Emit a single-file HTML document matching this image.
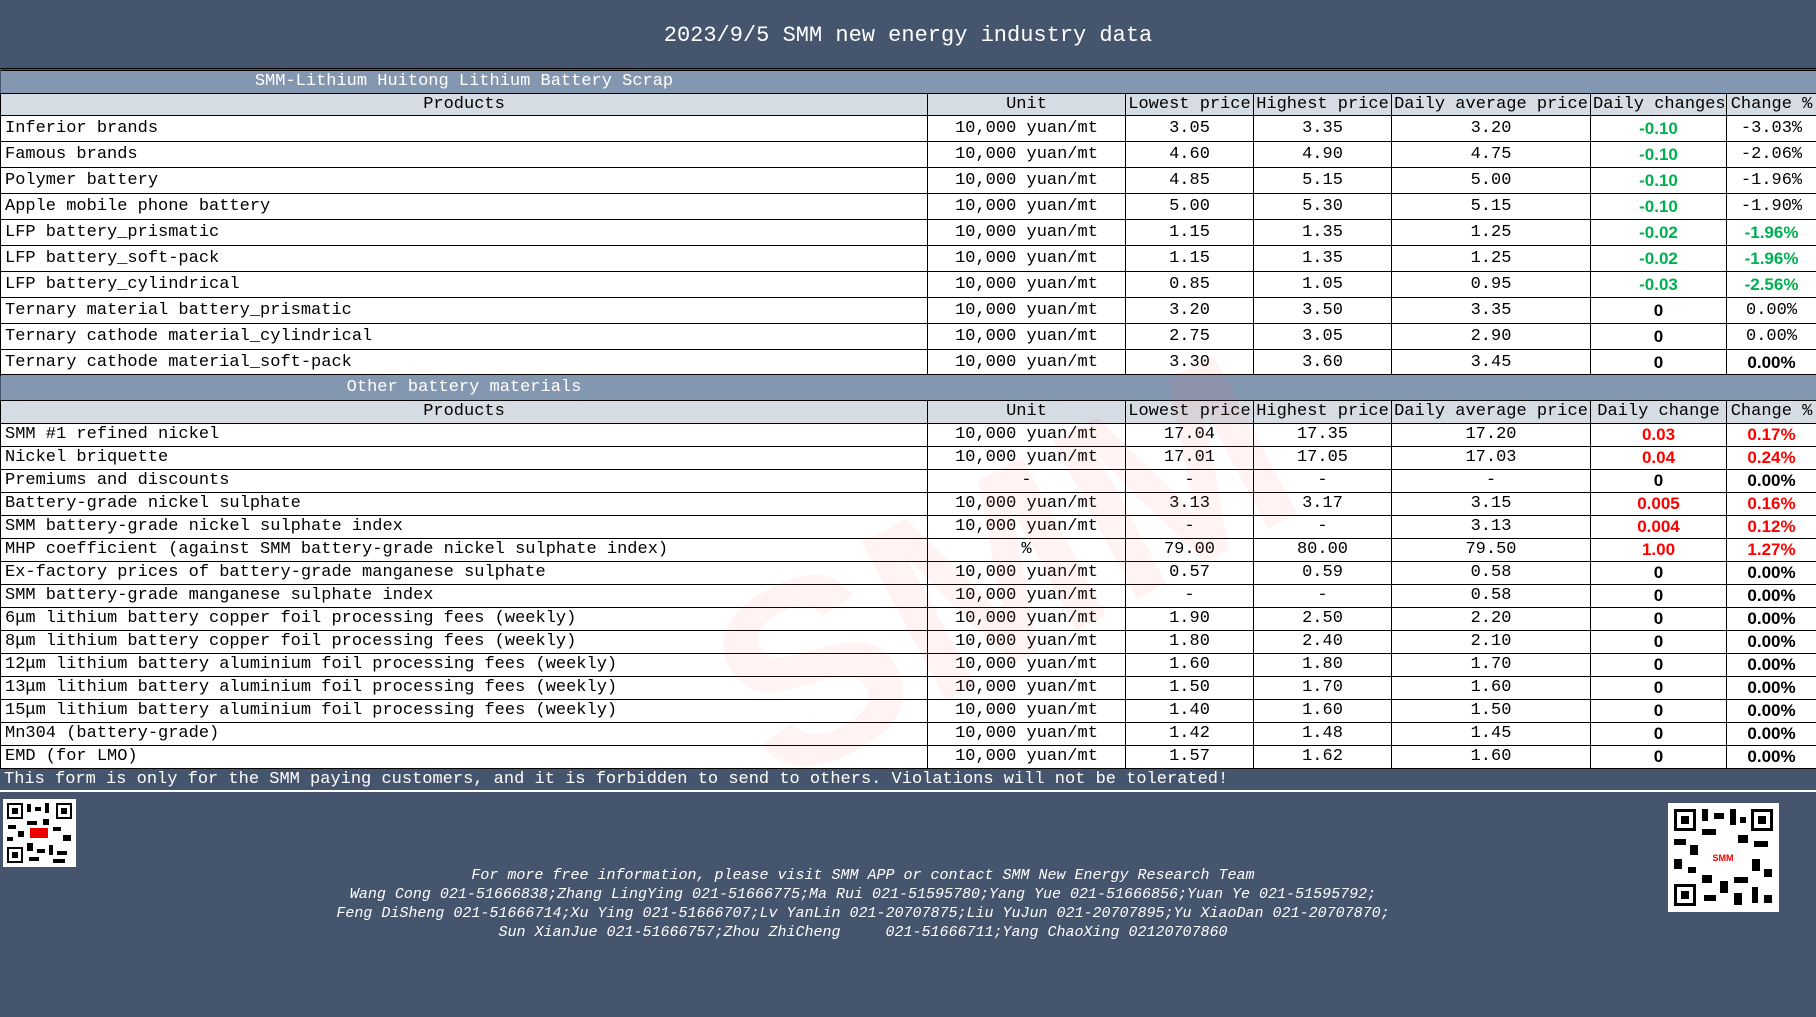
<!DOCTYPE html>
<html><head><meta charset="utf-8"><style>
*{margin:0;padding:0;box-sizing:border-box}
body{width:1816px;height:1017px;background:#46556e;position:relative;overflow:hidden;font-family:"Liberation Mono","Noto Sans CJK SC",monospace;font-size:17px;color:#000}
#title{position:absolute;left:0;top:0;width:1816px;height:69px;line-height:72px;text-align:center;color:#fff;font-size:22px;border-bottom:1px solid #000}
table{position:absolute;left:0;width:1816px;border-collapse:collapse;table-layout:fixed}
td{border:1px solid #000;white-space:nowrap;overflow:hidden;text-align:center;padding:0 2px;line-height:18px;vertical-align:middle}
td.l{text-align:left;padding-left:4px}
tr.sec td{background:#8497b0;color:#fff;border-left:none;border-right:none}
tr.hd td{background:#d6dce4}
tr.d td{background:#fff}
.g{color:#00b050;font-family:"Liberation Sans",sans-serif;font-weight:bold}
.r{color:#ff0000;font-family:"Liberation Sans",sans-serif;font-weight:bold}
.s{font-family:"Liberation Sans",sans-serif;font-weight:bold}
.t1 tr.d td{height:26px}
.t2 tr.d td{height:23px}
#disc{position:absolute;left:0;top:768px;width:1816px;height:24px;line-height:24px;color:#fff;padding-left:4px;border-bottom:2px solid #fff}
#foot{position:absolute;left:0;top:866px;width:1726px;text-align:center;color:#fff;font-style:italic;font-size:15px;line-height:19px}
#wm{position:absolute;left:700px;top:420px;font-family:"Liberation Sans",sans-serif;font-weight:bold;font-size:260px;color:rgba(255,80,80,0.07);transform:rotate(-28deg);pointer-events:none}
</style></head><body>
<div id="title">2023/9/5 SMM new energy industry data</div>
<table class="t1" style="top:70px">
<colgroup><col style="width:927px"><col style="width:198px"><col style="width:128px"><col style="width:138px"><col style="width:199px"><col style="width:136px"><col style="width:90px"></colgroup>
<tr class="sec"><td style="height:23px">SMM-Lithium Huitong Lithium Battery Scrap</td><td colspan="6"></td></tr>
<tr class="hd"><td style="height:22px">Products</td><td>Unit</td><td>Lowest price</td><td>Highest price</td><td>Daily average price</td><td>Daily changes</td><td>Change %</td></tr>
<tr class="d"><td class="l">Inferior brands</td><td>10,000 yuan/mt</td><td>3.05</td><td>3.35</td><td>3.20</td><td class="g">-0.10</td><td>-3.03%</td></tr>
<tr class="d"><td class="l">Famous brands</td><td>10,000 yuan/mt</td><td>4.60</td><td>4.90</td><td>4.75</td><td class="g">-0.10</td><td>-2.06%</td></tr>
<tr class="d"><td class="l">Polymer battery</td><td>10,000 yuan/mt</td><td>4.85</td><td>5.15</td><td>5.00</td><td class="g">-0.10</td><td>-1.96%</td></tr>
<tr class="d"><td class="l">Apple mobile phone battery</td><td>10,000 yuan/mt</td><td>5.00</td><td>5.30</td><td>5.15</td><td class="g">-0.10</td><td>-1.90%</td></tr>
<tr class="d"><td class="l">LFP battery_prismatic</td><td>10,000 yuan/mt</td><td>1.15</td><td>1.35</td><td>1.25</td><td class="g">-0.02</td><td class="g">-1.96%</td></tr>
<tr class="d"><td class="l">LFP battery_soft-pack</td><td>10,000 yuan/mt</td><td>1.15</td><td>1.35</td><td>1.25</td><td class="g">-0.02</td><td class="g">-1.96%</td></tr>
<tr class="d"><td class="l">LFP battery_cylindrical</td><td>10,000 yuan/mt</td><td>0.85</td><td>1.05</td><td>0.95</td><td class="g">-0.03</td><td class="g">-2.56%</td></tr>
<tr class="d"><td class="l">Ternary material battery_prismatic</td><td>10,000 yuan/mt</td><td>3.20</td><td>3.50</td><td>3.35</td><td class="s">0</td><td>0.00%</td></tr>
<tr class="d"><td class="l">Ternary cathode material_cylindrical</td><td>10,000 yuan/mt</td><td>2.75</td><td>3.05</td><td>2.90</td><td class="s">0</td><td>0.00%</td></tr>
<tr class="d"><td class="l">Ternary cathode material_soft-pack</td><td>10,000 yuan/mt</td><td>3.30</td><td>3.60</td><td>3.45</td><td class="s">0</td><td class="s">0.00%</td></tr>
</table>
<table class="t2" style="top:374px">
<colgroup><col style="width:927px"><col style="width:198px"><col style="width:128px"><col style="width:138px"><col style="width:199px"><col style="width:136px"><col style="width:90px"></colgroup>
<tr class="sec"><td style="height:26px">Other battery materials</td><td colspan="6"></td></tr>
<tr class="hd"><td style="height:23px">Products</td><td>Unit</td><td>Lowest price</td><td>Highest price</td><td>Daily average price</td><td>Daily change</td><td>Change %</td></tr>
<tr class="d"><td class="l">SMM #1 refined nickel</td><td>10,000 yuan/mt</td><td>17.04</td><td>17.35</td><td>17.20</td><td class="r">0.03</td><td class="r">0.17%</td></tr>
<tr class="d"><td class="l">Nickel briquette</td><td>10,000 yuan/mt</td><td>17.01</td><td>17.05</td><td>17.03</td><td class="r">0.04</td><td class="r">0.24%</td></tr>
<tr class="d"><td class="l">Premiums and discounts</td><td>-</td><td>-</td><td>-</td><td>-</td><td class="s">0</td><td class="s">0.00%</td></tr>
<tr class="d"><td class="l">Battery-grade nickel sulphate</td><td>10,000 yuan/mt</td><td>3.13</td><td>3.17</td><td>3.15</td><td class="r">0.005</td><td class="r">0.16%</td></tr>
<tr class="d"><td class="l">SMM battery-grade nickel sulphate index</td><td>10,000 yuan/mt</td><td>-</td><td>-</td><td>3.13</td><td class="r">0.004</td><td class="r">0.12%</td></tr>
<tr class="d"><td class="l">MHP coefficient (against SMM battery-grade nickel sulphate index)</td><td>%</td><td>79.00</td><td>80.00</td><td>79.50</td><td class="r">1.00</td><td class="r">1.27%</td></tr>
<tr class="d"><td class="l">Ex-factory prices of battery-grade manganese sulphate</td><td>10,000 yuan/mt</td><td>0.57</td><td>0.59</td><td>0.58</td><td class="s">0</td><td class="s">0.00%</td></tr>
<tr class="d"><td class="l">SMM battery-grade manganese sulphate index</td><td>10,000 yuan/mt</td><td>-</td><td>-</td><td>0.58</td><td class="s">0</td><td class="s">0.00%</td></tr>
<tr class="d"><td class="l">6μm lithium battery copper foil processing fees (weekly)</td><td>10,000 yuan/mt</td><td>1.90</td><td>2.50</td><td>2.20</td><td class="s">0</td><td class="s">0.00%</td></tr>
<tr class="d"><td class="l">8μm lithium battery copper foil processing fees (weekly)</td><td>10,000 yuan/mt</td><td>1.80</td><td>2.40</td><td>2.10</td><td class="s">0</td><td class="s">0.00%</td></tr>
<tr class="d"><td class="l">12μm lithium battery aluminium foil processing fees (weekly)</td><td>10,000 yuan/mt</td><td>1.60</td><td>1.80</td><td>1.70</td><td class="s">0</td><td class="s">0.00%</td></tr>
<tr class="d"><td class="l">13μm lithium battery aluminium foil processing fees (weekly)</td><td>10,000 yuan/mt</td><td>1.50</td><td>1.70</td><td>1.60</td><td class="s">0</td><td class="s">0.00%</td></tr>
<tr class="d"><td class="l">15μm lithium battery aluminium foil processing fees (weekly)</td><td>10,000 yuan/mt</td><td>1.40</td><td>1.60</td><td>1.50</td><td class="s">0</td><td class="s">0.00%</td></tr>
<tr class="d"><td class="l">Mn304 (battery-grade)</td><td>10,000 yuan/mt</td><td>1.42</td><td>1.48</td><td>1.45</td><td class="s">0</td><td class="s">0.00%</td></tr>
<tr class="d"><td class="l">EMD (for LMO)</td><td>10,000 yuan/mt</td><td>1.57</td><td>1.62</td><td>1.60</td><td class="s">0</td><td class="s">0.00%</td></tr>
</table>
<div id="wm">SMM</div>
<div id="disc">This form is only for the SMM paying customers, and it is forbidden to send to others. Violations will not be tolerated!</div>
<svg style="position:absolute;left:3px;top:799px" width="73" height="68" viewBox="0 0 73 68">
<rect width="73" height="68" fill="#fff"/>
<g fill="#000">
<rect x="4" y="4" width="16" height="16"/><rect x="53" y="4" width="16" height="16"/><rect x="4" y="48" width="16" height="16"/>
</g><g fill="#fff"><rect x="6" y="6" width="12" height="12"/><rect x="55" y="6" width="12" height="12"/><rect x="6" y="50" width="12" height="12"/></g>
<g fill="#000"><rect x="9" y="9" width="6" height="6"/><rect x="58" y="9" width="6" height="6"/><rect x="9" y="53" width="6" height="6"/>
<rect x="24" y="5" width="4" height="8"/><rect x="32" y="8" width="6" height="4"/><rect x="42" y="4" width="4" height="10"/><rect x="24" y="22" width="10" height="4"/><rect x="40" y="20" width="6" height="6"/><rect x="5" y="26" width="8" height="4"/><rect x="15" y="32" width="6" height="6"/><rect x="50" y="28" width="8" height="4"/><rect x="60" y="36" width="8" height="6"/><rect x="24" y="44" width="6" height="8"/><rect x="34" y="50" width="8" height="4"/><rect x="46" y="46" width="4" height="10"/><rect x="54" y="52" width="10" height="4"/><rect x="26" y="58" width="10" height="4"/><rect x="50" y="60" width="12" height="4"/><rect x="4" y="38" width="6" height="4"/></g>
<rect x="27" y="29" width="18" height="10" fill="#e00"/>
</svg>
<svg style="position:absolute;left:1668px;top:803px" width="111" height="109" viewBox="0 0 111 109">
<rect width="111" height="109" fill="#fff"/>
<g fill="#000"><rect x="6" y="6" width="22" height="22"/><rect x="83" y="6" width="22" height="22"/><rect x="6" y="81" width="22" height="22"/></g>
<g fill="#fff"><rect x="9" y="9" width="16" height="16"/><rect x="86" y="9" width="16" height="16"/><rect x="9" y="84" width="16" height="16"/></g>
<g fill="#000"><rect x="13" y="13" width="8" height="8"/><rect x="90" y="13" width="8" height="8"/><rect x="13" y="88" width="8" height="8"/>
<rect x="34" y="6" width="6" height="12"/><rect x="46" y="10" width="10" height="6"/><rect x="62" y="6" width="6" height="16"/><rect x="72" y="14" width="6" height="6"/><rect x="34" y="26" width="14" height="6"/><rect x="6" y="36" width="12" height="6"/><rect x="22" y="42" width="8" height="10"/><rect x="70" y="32" width="10" height="8"/><rect x="86" y="38" width="14" height="6"/><rect x="6" y="56" width="8" height="10"/><rect x="84" y="56" width="8" height="12"/><rect x="96" y="66" width="8" height="8"/><rect x="34" y="72" width="10" height="8"/><rect x="52" y="78" width="8" height="12"/><rect x="66" y="74" width="14" height="6"/><rect x="36" y="92" width="12" height="6"/><rect x="66" y="90" width="8" height="12"/><rect x="84" y="84" width="6" height="16"/><rect x="96" y="92" width="8" height="8"/><rect x="20" y="64" width="8" height="6"/></g>
<rect x="40" y="44" width="30" height="20" fill="#fff"/><text x="55" y="58" font-size="9" font-family="Liberation Sans" font-weight="bold" fill="#e00" text-anchor="middle">SMM</text>
</svg>
<div id="foot">For more free information, please visit SMM APP or contact SMM New Energy Research Team<br>Wang Cong 021-51666838;Zhang LingYing 021-51666775;Ma Rui 021-51595780;Yang Yue 021-51666856;Yuan Ye 021-51595792;<br>Feng DiSheng 021-51666714;Xu Ying 021-51666707;Lv YanLin 021-20707875;Liu YuJun 021-20707895;Yu XiaoDan 021-20707870;<br>Sun XianJue 021-51666757;Zhou ZhiCheng &nbsp;&nbsp;&nbsp; 021-51666711;Yang ChaoXing 02120707860</div>
</body></html>
